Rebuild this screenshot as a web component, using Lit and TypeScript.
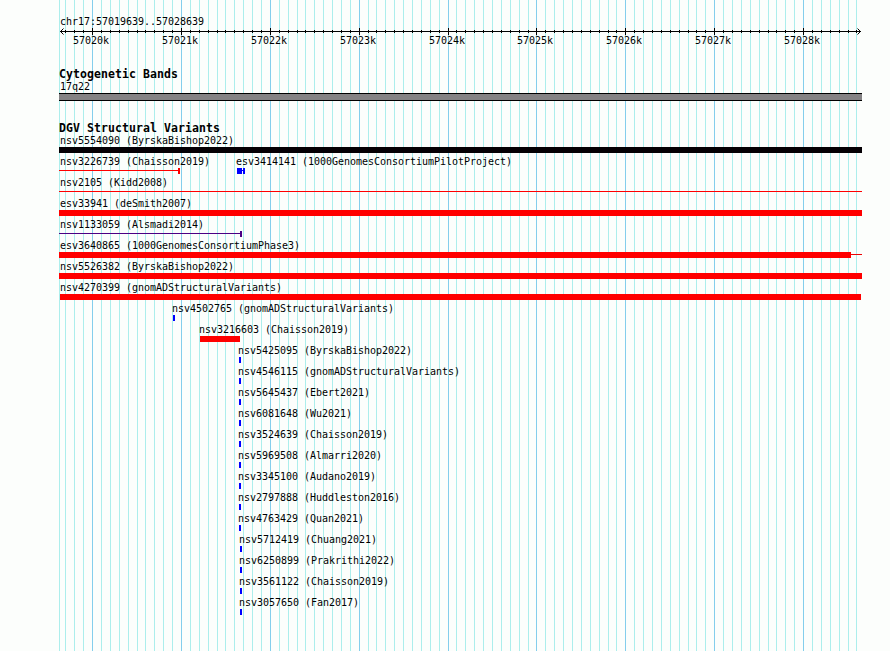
import { LitElement, css, html, svg } from "lit";
import { customElement } from "lit/decorators.js";
import { styleMap } from "lit/directives/style-map.js";

type Shape = { x: number; w: number; kind: "bar" | "line"; color: string };
type Feature = { x: number; label: string; shapes: Shape[] };

const LEFT = 59;
const bar = (x: number, w: number, color = "#ff0000"): Shape => ({ x, w, kind: "bar", color });
const line = (x: number, w: number, color = "#ff0000"): Shape => ({ x, w, kind: "line", color });
const small = (x: number, label: string): Feature[] => [{ x, label, shapes: [bar(x + 1, 2, "#0000ff")] }];

const ROWS: Feature[][] = [
  [{ x: 60, label: "nsv5554090 (ByrskaBishop2022)", shapes: [bar(59, 803, "#040004")] }],
  [
    { x: 60, label: "nsv3226739 (Chaisson2019)", shapes: [line(59, 119), bar(178, 2)] },
    {
      x: 236,
      label: "esv3414141 (1000GenomesConsortiumPilotProject)",
      shapes: [bar(237, 5, "#0000ff"), line(242, 1, "#0000ff"), bar(243, 2, "#0000ff")],
    },
  ],
  [{ x: 60, label: "nsv2105 (Kidd2008)", shapes: [line(59, 803)] }],
  [{ x: 60, label: "esv33941 (deSmith2007)", shapes: [bar(59, 803)] }],
  [{ x: 60, label: "nsv1133059 (Alsmadi2014)", shapes: [line(59, 181, "#4c0084"), bar(240, 2, "#4c0084")] }],
  [{ x: 60, label: "esv3640865 (1000GenomesConsortiumPhase3)", shapes: [bar(59, 792), line(851, 11, "#ec0204")] }],
  [{ x: 60, label: "nsv5526382 (ByrskaBishop2022)", shapes: [bar(59, 803)] }],
  [{ x: 60, label: "nsv4270399 (gnomADStructuralVariants)", shapes: [bar(60, 801)] }],
  small(172, "nsv4502765 (gnomADStructuralVariants)"),
  [{ x: 199, label: "nsv3216603 (Chaisson2019)", shapes: [bar(200, 40)] }],
  small(238, "nsv5425095 (ByrskaBishop2022)"),
  small(238, "nsv4546115 (gnomADStructuralVariants)"),
  small(238, "nsv5645437 (Ebert2021)"),
  small(238, "nsv6081648 (Wu2021)"),
  small(238, "nsv3524639 (Chaisson2019)"),
  small(238, "nsv5969508 (Almarri2020)"),
  small(238, "nsv3345100 (Audano2019)"),
  small(238, "nsv2797888 (Huddleston2016)"),
  small(238, "nsv4763429 (Quan2021)"),
  small(239, "nsv5712419 (Chuang2021)"),
  small(239, "nsv6250899 (Prakrithi2022)"),
  small(239, "nsv3561122 (Chaisson2019)"),
  small(239, "nsv3057650 (Fan2017)"),
];

// One tick per 100 bp; every tenth falls on a whole kilobase.
const TICKS = Array.from({ length: 90 }, (_, i) => {
  const k = i - 3;
  return { x: Math.floor(92.58 + 8.888 * k), major: k % 10 === 0, k };
});

@customElement("app-root")
export class AppRoot extends LitElement {
  static styles = css`
    :host {
      display: block;
      position: relative;
      width: 890px;
      height: 651px;
      overflow: hidden;
      background: #fcfefc;
      color: #000;
      font: 10px/12px "DejaVu Sans Mono", "Liberation Mono", monospace;
      letter-spacing: -0.0205px;
      white-space: nowrap;
    }
    .grid {
      position: absolute;
      inset: 0;
    }
    svg {
      display: block;
    }
    .content {
      position: relative;
      display: flex;
      flex-direction: column;
    }
    .region {
      height: 11px;
      margin: 16px 0 0 60px;
    }
    .axis {
      height: 40px;
    }
    .title {
      height: 14px;
      line-height: 14px;
      margin-left: 59px;
      font-weight: bold;
      font-size: 11.5px;
      letter-spacing: 0.077px;
    }
    .variants {
      height: 13px;
    }
    .cyto-label {
      height: 12px;
      margin-left: 60px;
    }
    .band {
      box-sizing: border-box;
      width: 803px;
      height: 8px;
      margin: 0 0 20px 59px;
      border: solid #000;
      border-width: 1px 0;
      background: #848284;
    }
    .row {
      display: grid;
      height: 21px;
    }
    .feature {
      grid-area: 1 / 1;
    }
    .label {
      display: block;
      height: 12px;
      padding-top: 1px;
    }
  `;

  private grid() {
    return html`<svg class="grid" width="890" height="651" shape-rendering="crispEdges">
      <rect x=${LEFT} y="0" width="1" height="651" fill="#aceeec" />
      ${TICKS.map(
        (t) => svg`<rect x=${t.x} y="0" width="1" height="651" fill=${t.major ? "#84ceec" : "#aceeec"} />`,
      )}
    </svg>`;
  }

  private axis() {
    return html`<svg class="axis" width="890" height="40">
      <g shape-rendering="crispEdges">
        <rect x="60" y="4" width="801" height="1" />
        ${TICKS.map((t) =>
          t.major
            ? svg`<rect x=${t.x} y="1" width="1" height="7" />`
            : svg`<rect x=${t.x} y="3" width="1" height="3" />`,
        )}
      </g>
      <path d="M63.5 1.5L60.5 4.5L63.5 7.5M857.5 1.5L860.5 4.5L857.5 7.5" fill="none" stroke="#000" />
      ${TICKS.filter((t) => t.major).map(
        (t) => svg`<text x=${t.x - 19} y="17">${57020 + t.k / 10}k</text>`,
      )}
    </svg>`;
  }

  private shape(s: Shape) {
    return svg`<rect x=${s.x} y=${s.kind === "bar" ? 0 : 2} width=${s.w} height=${s.kind === "bar" ? 6 : 1} fill=${s.color} />`;
  }

  render() {
    return html`
      ${this.grid()}
      <div class="content">
        <div class="region">chr17:57019639..57028639</div>
        ${this.axis()}
        <div class="title">Cytogenetic Bands</div>
        <div class="cyto-label">17q22</div>
        <div class="band"></div>
        <div class="title variants">DGV Structural Variants</div>
        ${ROWS.map(
          (row) => html`<div class="row">
            ${row.map(
              (f) => html`<div class="feature">
                <span class="label" style=${styleMap({ marginLeft: f.x + "px" })}>${f.label}</span>
                <svg width="890" height="8" shape-rendering="crispEdges">${f.shapes.map((s) => this.shape(s))}</svg>
              </div>`,
            )}
          </div>`,
        )}
      </div>
    `;
  }
}
